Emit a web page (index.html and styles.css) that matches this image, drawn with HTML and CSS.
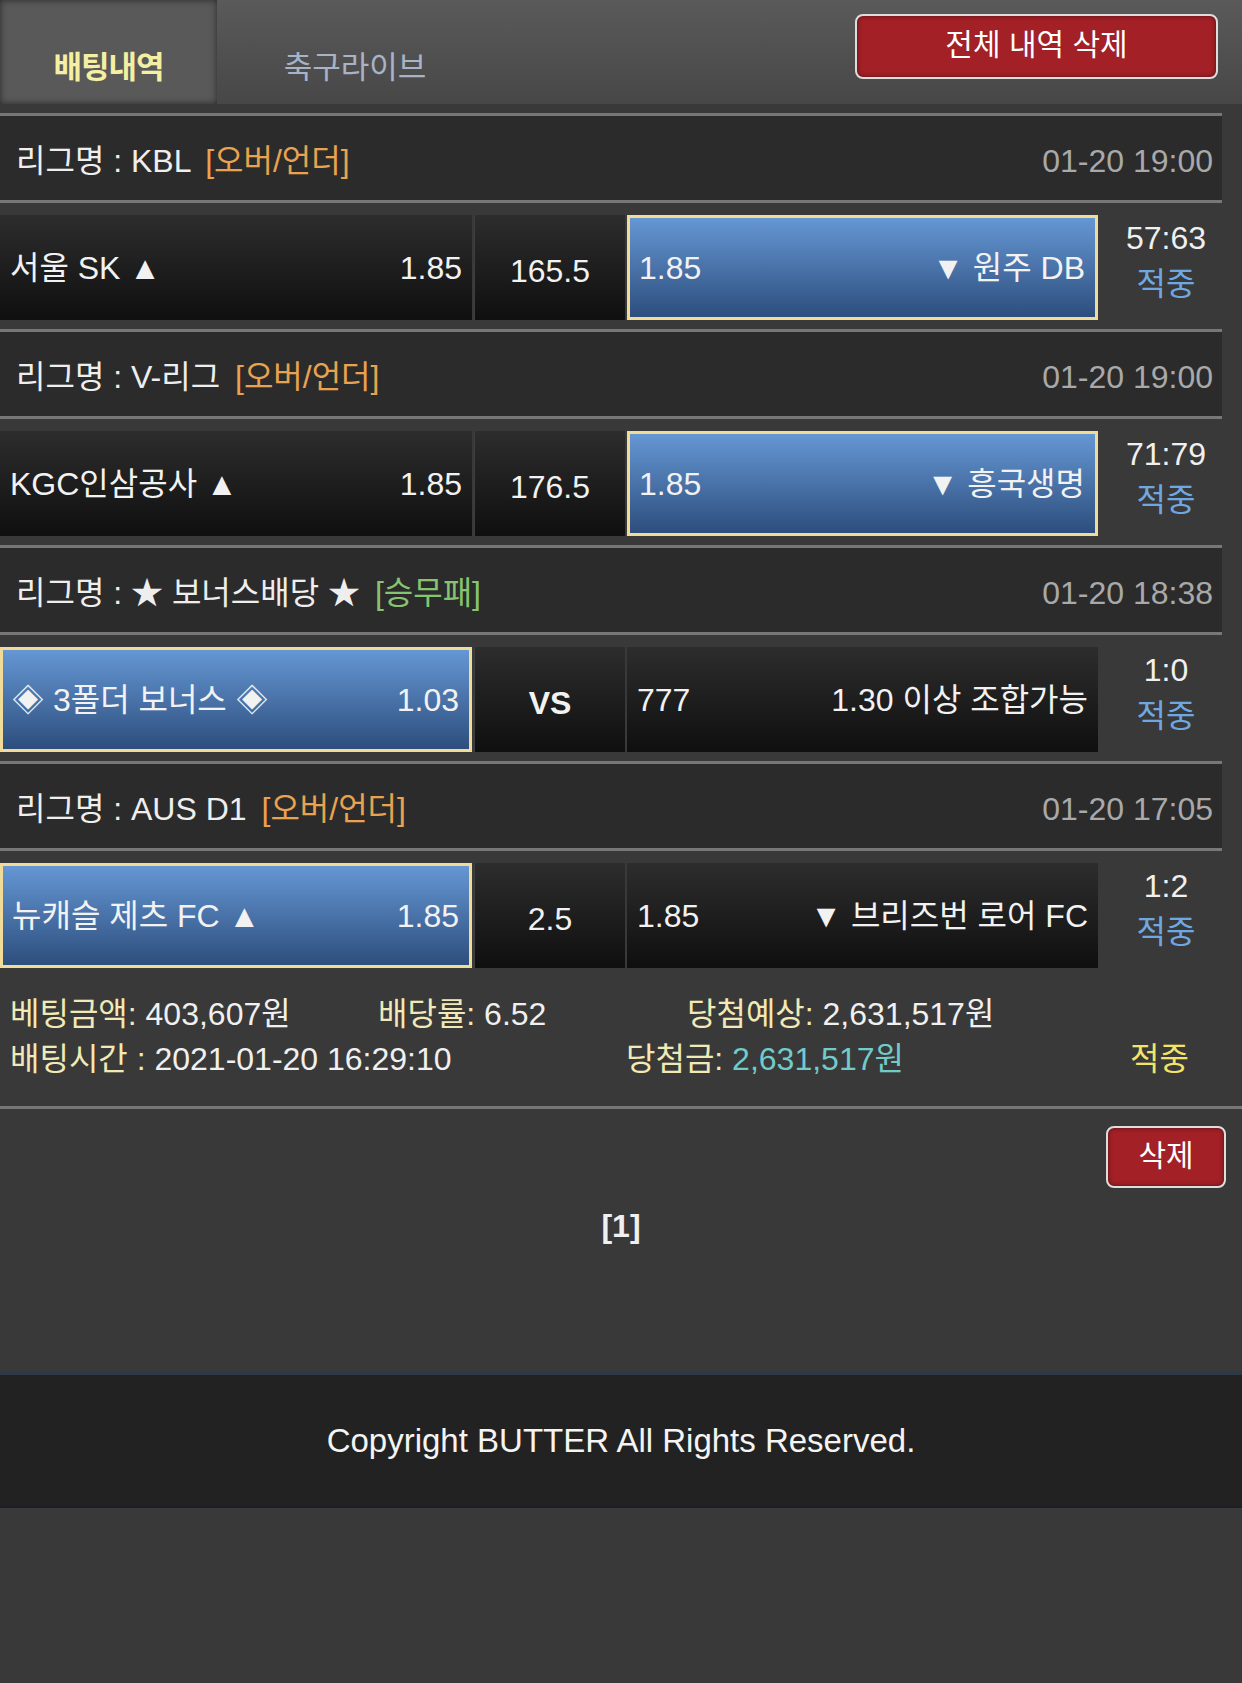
FILE: index.html
```html
<!DOCTYPE html>
<html lang="ko">
<head>
    <meta charset="UTF-8">
    <meta name="viewport" content="width=device-width, initial-scale=1.0">
    <title>배팅내역</title>
    <link rel="stylesheet" href="styles.css">
</head>
<body>
    <div class="top-bar">
        <a class="tab tab-active" href="#">배팅내역</a>
        <a class="tab tab-live" href="#">축구라이브</a>
        <button class="btn-red btn-clear-all">전체 내역 삭제</button>
    </div>

    <div class="bet-box">
        <div class="bet-list">
            <div class="league-row">
                <span class="league-name">리그명 : KBL <span class="tag-ou">[오버/언더]</span></span>
                <span class="league-time">01-20 19:00</span>
            </div>
            <div class="match-row">
                <div class="cell side">
                    <span>서울 SK ▲</span><span>1.85</span>
                </div>
                <div class="cell mid">165.5</div>
                <div class="cell side picked">
                    <span>1.85</span><span>▼ 원주 DB</span>
                </div>
                <div class="score"><span>57:63</span><span class="hit">적중</span></div>
            </div>

            <div class="league-row">
                <span class="league-name">리그명 : V-리그 <span class="tag-ou">[오버/언더]</span></span>
                <span class="league-time">01-20 19:00</span>
            </div>
            <div class="match-row">
                <div class="cell side">
                    <span>KGC인삼공사 ▲</span><span>1.85</span>
                </div>
                <div class="cell mid">176.5</div>
                <div class="cell side picked">
                    <span>1.85</span><span>▼ 흥국생명</span>
                </div>
                <div class="score"><span>71:79</span><span class="hit">적중</span></div>
            </div>

            <div class="league-row">
                <span class="league-name">리그명 : ★ 보너스배당 ★ <span class="tag-wdl">[승무패]</span></span>
                <span class="league-time">01-20 18:38</span>
            </div>
            <div class="match-row">
                <div class="cell side picked">
                    <span>◈ 3폴더 보너스 ◈</span><span>1.03</span>
                </div>
                <div class="cell mid vs">VS</div>
                <div class="cell side">
                    <span>777</span><span>1.30 이상 조합가능</span>
                </div>
                <div class="score"><span>1:0</span><span class="hit">적중</span></div>
            </div>

            <div class="league-row">
                <span class="league-name">리그명 : AUS D1 <span class="tag-ou">[오버/언더]</span></span>
                <span class="league-time">01-20 17:05</span>
            </div>
            <div class="match-row">
                <div class="cell side picked">
                    <span>뉴캐슬 제츠 FC ▲</span><span>1.85</span>
                </div>
                <div class="cell mid">2.5</div>
                <div class="cell side">
                    <span>1.85</span><span>▼ 브리즈번 로어 FC</span>
                </div>
                <div class="score"><span>1:2</span><span class="hit">적중</span></div>
            </div>
        </div>

        <div class="summary">
            <div class="summary-line">
                <span class="col-a"><em>베팅금액:</em> 403,607원</span>
                <span class="col-b"><em>배당률:</em> 6.52</span>
                <span><em>당첨예상:</em> 2,631,517원</span>
            </div>
            <div class="summary-line">
                <span class="col-c"><em>배팅시간 :</em> 2021-01-20 16:29:10</span>
                <span class="col-d"><em>당첨금:</em> <b class="win-amount">2,631,517원</b></span>
                <span class="result-hit">적중</span>
            </div>
        </div>
    </div>

    <div class="actions">
        <button class="btn-red btn-delete">삭제</button>
    </div>
    <div class="pager">[1]</div>

    <footer class="footer">Copyright BUTTER All Rights Reserved.</footer>
</body>
</html>
```

FILE: styles.css
```css
body {
    margin: 0;
    background: #393939;
    font-family: "Liberation Sans", "Noto Sans CJK KR", sans-serif;
    color: #f0f0f0;
    font-size: 32px;
}

.top-bar {
    height: 104px;
    display: flex;
    align-items: stretch;
    background: linear-gradient(#5a5a5a, #474747);
}

.tab {
    width: 217px;
    text-align: center;
    padding-top: 46px;
    box-sizing: border-box;
    text-decoration: none;
    font-size: 30px;
    line-height: 44px;
    color: #a9b3c6;
}

.tab-live {
    width: 276px;
    font-size: 31px;
}

.tab-active {
    background: #595959;
    box-shadow: inset 0 0 7px rgba(0, 0, 0, 0.55);
    color: #f4efa2;
    font-size: 31px;
    font-weight: 700;
    letter-spacing: -1px;
}

.btn-red {
    background: #a22026;
    color: #ffffff;
    border: 2px solid #dddddd;
    border-radius: 8px;
    font-family: inherit;
    font-size: 30px;
    box-shadow: inset 0 0 4px rgba(0, 0, 0, 0.5);
}

.btn-clear-all {
    width: 363px;
    height: 65px;
    margin: 14px 24px 0 auto;
    line-height: 56px;
    padding: 0 0 4px;
}

.bet-box {
    margin-top: 9px;
    border-bottom: 3px solid #777777;
}

.bet-list {
    width: 1222px;
}

.league-row {
    height: 78px;
    background: #2b2b2b;
    border-top: 3px solid #777777;
    border-bottom: 3px solid #777777;
    display: flex;
    justify-content: space-between;
    align-items: center;
    padding: 6px 9px 0 16px;
    line-height: 40px;
}

.league-name {
    color: #eeeeee;
}

.tag-ou {
    color: #e9a24f;
    margin-left: 6px;
}

.tag-wdl {
    color: #87c46f;
    margin-left: 6px;
}

.league-time {
    color: #a9a9a9;
}

.match-row {
    display: flex;
    gap: 2px;
    height: 105px;
    margin: 12px 0 9px;
}

.cell {
    box-sizing: border-box;
    background: linear-gradient(#2d2d2d, #0f0f0f);
    display: flex;
    align-items: center;
    line-height: 40px;
    color: #f2f2f2;
}

.side {
    width: 472px;
    justify-content: space-between;
    padding: 0 10px;
}

.side + .mid + .side {
    width: 471px;
}

.mid {
    width: 151px;
    justify-content: center;
    padding-top: 6px;
    border-left: 1px solid #3e3e3e;
}

.vs {
    font-weight: 700;
}

.picked {
    background: linear-gradient(#6597d4, #2d4e7d);
    border: 3px solid #f0dc98;
    padding: 0 10px 0 9px;
}

.score {
    flex: 1;
    display: flex;
    flex-direction: column;
    align-items: center;
    line-height: 46px;
    padding-left: 10px;
}

.hit {
    color: #6fa8e0;
}

.summary {
    padding: 15px 0 24px 10px;
    font-size: 32px;
}

.summary-line {
    display: flex;
    line-height: 45px;
    white-space: nowrap;
}

.summary em {
    font-style: normal;
    color: #f1e9b6;
}

.col-a {
    width: 368px;
}

.col-b {
    width: 309px;
}

.col-c {
    width: 616px;
}

.col-d {
    width: 504px;
}

.win-amount {
    font-weight: 400;
    color: #72cbcb;
}

.result-hit {
    color: #f3e367;
}

.actions {
    display: flex;
    justify-content: flex-end;
    padding: 17px 16px 0 0;
}

.btn-delete {
    width: 120px;
    height: 62px;
    line-height: 54px;
    padding: 0 0 2px;
}

.pager {
    text-align: center;
    font-weight: 700;
    line-height: 40px;
    margin-top: 18px;
    height: 165px;
}

.footer {
    background: #222222;
    border-top: 4px solid #2e3947;
    border-bottom: 2px solid #1b1e22;
    height: 131px;
    display: flex;
    align-items: center;
    justify-content: center;
    font-size: 33px;
    color: #f4f4f4;
}
```
